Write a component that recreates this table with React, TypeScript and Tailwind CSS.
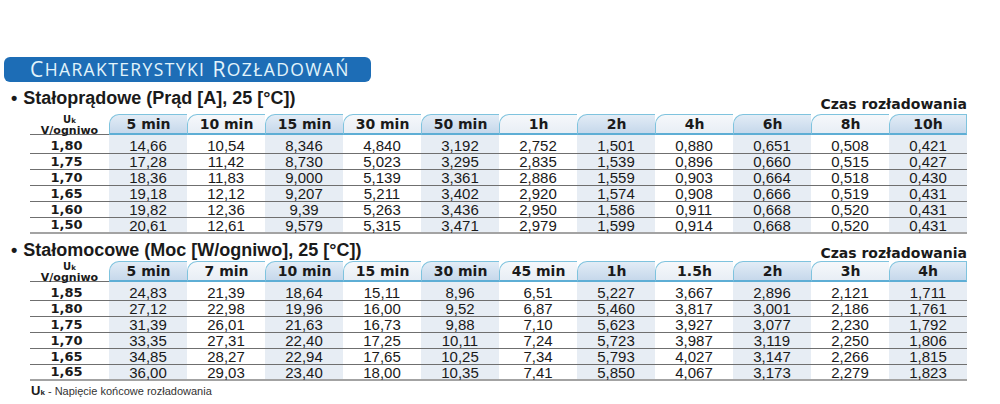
const heads1 = ['5 min', '10 min', '15 min', '30 min', '50 min', '1h', '2h', '4h', '6h', '8h', '10h'];
const rows1 = [
  ['1,80', '14,66', '10,54', '8,346', '4,840', '3,192', '2,752', '1,501', '0,880', '0,651', '0,508', '0,421'],
  ['1,75', '17,28', '11,42', '8,730', '5,023', '3,295', '2,835', '1,539', '0,896', '0,660', '0,515', '0,427'],
  ['1,70', '18,36', '11,83', '9,000', '5,139', '3,361', '2,886', '1,559', '0,903', '0,664', '0,518', '0,430'],
  ['1,65', '19,18', '12,12', '9,207', '5,211', '3,402', '2,920', '1,574', '0,908', '0,666', '0,519', '0,431'],
  ['1,60', '19,82', '12,36', '9,39', '5,263', '3,436', '2,950', '1,586', '0,911', '0,668', '0,520', '0,431'],
  ['1,50', '20,61', '12,61', '9,579', '5,315', '3,471', '2,979', '1,599', '0,914', '0,668', '0,520', '0,431'],
];

const heads2 = ['5 min', '7 min', '10 min', '15 min', '30 min', '45 min', '1h', '1.5h', '2h', '3h', '4h'];
const rows2 = [
  ['1,85', '24,83', '21,39', '18,64', '15,11', '8,96', '6,51', '5,227', '3,667', '2,896', '2,121', '1,711'],
  ['1,80', '27,12', '22,98', '19,96', '16,00', '9,52', '6,87', '5,460', '3,817', '3,001', '2,186', '1,761'],
  ['1,75', '31,39', '26,01', '21,63', '16,73', '9,88', '7,10', '5,623', '3,927', '3,077', '2,230', '1,792'],
  ['1,70', '33,35', '27,31', '22,40', '17,25', '10,11', '7,24', '5,723', '3,987', '3,119', '2,250', '1,806'],
  ['1,65', '34,85', '28,27', '22,94', '17,65', '10,25', '7,34', '5,793', '4,027', '3,147', '2,266', '1,815'],
  ['1,65', '36,00', '29,03', '23,40', '18,00', '10,35', '7,41', '5,850', '4,067', '3,173', '2,279', '1,823'],
];

function SectionHead({ title }: { title: string }) {
  return (
    <div className="flex h-[32px] w-[967px] items-end justify-between pl-[11px]">
      <div className="mb-[6px] flex items-baseline font-['Liberation_Sans',sans-serif] text-[18px] font-bold leading-[20px] text-[#1a1a1a]">
        <span className="mr-[6px]">•</span>
        <span>{title}</span>
      </div>
      <div className="mb-[2px] font-['DejaVu_Sans',sans-serif] text-[14px] font-bold leading-[16px] text-[#1a1a1a]">
        Czas rozładowania
      </div>
    </div>
  );
}

function Table({ heads, rows }: { heads: string[]; rows: string[][] }) {
  return (
    <div className="ml-[30px] w-[937px]">
      {/* header */}
      <div className="flex h-[21px]">
        <div className="flex w-[79px] flex-col items-center border-b border-[#6f6f6f] font-['DejaVu_Sans',sans-serif] font-bold leading-none text-[#1a1a1a]">
          <div className="mt-[1px] text-[10px]">
            U<span className="text-[7px]">k</span>
          </div>
          <div className="text-[11px]">V/ogniwo</div>
        </div>
        {heads.map((h, i) => (
          <div
            key={h}
            className={
              'flex w-[78px] items-center justify-center rounded-tl-[10px] border-t border-l border-b-2 border-t-[#7fc3de] border-l-[#7fc3de] border-b-[#5eaed5] font-[\'DejaVu_Sans\',sans-serif] text-[14px] font-bold text-[#1a1a1a] ' +
              (i % 2 === 0
                ? 'bg-gradient-to-b from-[#e2ecf6] to-[#c6d8eb]'
                : 'bg-gradient-to-b from-[#f6f8fb] to-[#e8eef5]') +
              (i === heads.length - 1 ? ' border-r border-r-[#7fc3de]' : '')
            }
          >
            {h}
          </div>
        ))}
      </div>
      {/* rows */}
      {rows.map((r, ri) => (
        <div
          key={ri}
          className={
            'flex ' +
            (ri === 0 ? 'h-[19px] ' : 'h-[16px] ') +
            (ri === rows.length - 1 ? 'border-b-2 border-[#a3a3a3]' : 'border-b border-[#6f6f6f]')
          }
        >
          <div
            className={
              'flex w-[79px] items-center justify-center pr-[6px] font-[\'DejaVu_Sans\',sans-serif] text-[13px] font-bold text-[#1a1a1a] ' +
              (ri === 0 ? 'pt-[3px]' : '')
            }
          >
            {r[0]}
          </div>
          {r.slice(1).map((v, ci) => (
            <div
              key={ci}
              className={
                'flex w-[78px] items-center justify-center font-[\'Liberation_Sans\',sans-serif] text-[15px] leading-none text-[#1a1a1a] ' +
                (ci % 2 === 0 ? 'bg-[#e7edf4] ' : 'bg-white ') +
                (ri === 0 ? 'pt-[3px]' : '')
              }
            >
              {v}
            </div>
          ))}
        </div>
      ))}
    </div>
  );
}

export default function App() {
  return (
    <div className="h-[404px] w-[1000px] overflow-hidden bg-white">
      <div className="ml-[4px] mt-[57px] flex h-[25px] w-[367px] items-center rounded-[6px] bg-[#1d6db6] pl-[26px] font-['Open_Sans',sans-serif] leading-none tracking-[1.4px] text-[#e2f4fb]">
        <span className="text-[21px]">C</span>
        <span className="text-[17.5px]">HARAKTERYSTYKI</span>
        <span className="w-[7px]" />
        <span className="text-[21px]">R</span>
        <span className="text-[17.5px]">OZŁADOWAŃ</span>
      </div>

      <SectionHead title="Stałoprądowe (Prąd [A], 25 [°C])" />
      <Table heads={heads1} rows={rows1} />

      <div className="h-[27px] w-[967px]">
        <div className="flex h-full items-end justify-between pl-[11px]">
          <div className="mb-[1px] flex items-baseline font-['Liberation_Sans',sans-serif] text-[18px] font-bold leading-[20px] text-[#1a1a1a]">
            <span className="mr-[6px]">•</span>
            <span>Stałomocowe (Moc [W/ogniwo], 25 [°C])</span>
          </div>
          <div className="font-['DejaVu_Sans',sans-serif] text-[14px] font-bold leading-[16px] text-[#1a1a1a]">
            Czas rozładowania
          </div>
        </div>
      </div>
      <Table heads={heads2} rows={rows2} />

      <div className="ml-[31px] mt-[3px] font-['Liberation_Sans',sans-serif] text-[11px] leading-[14px] text-[#333]">
        <span className="font-bold text-[13px] text-[#1a1a1a]">
          U<span className="text-[8px]">k</span>
        </span>{' '}
        - Napięcie końcowe rozładowania
      </div>
    </div>
  );
}
